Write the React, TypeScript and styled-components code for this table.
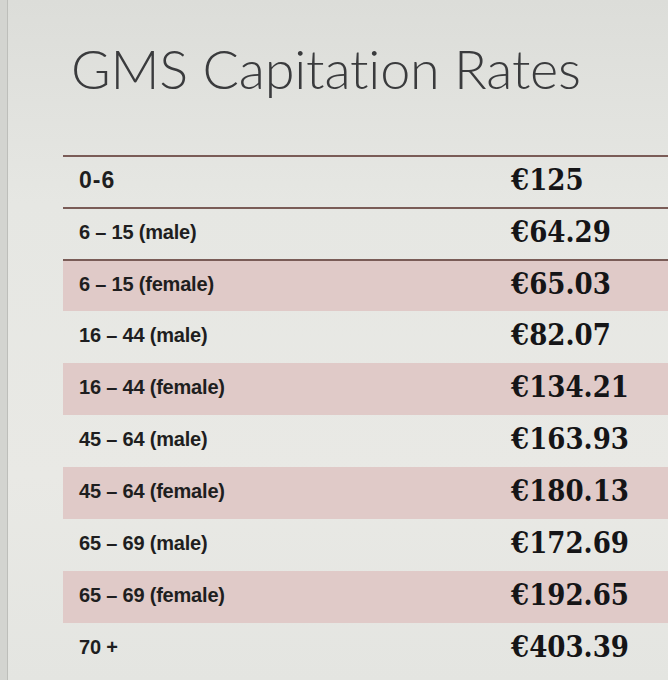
import React from 'react';
import styled, { createGlobalStyle } from 'styled-components';

const GlobalStyle = createGlobalStyle`
  html, body {
    margin: 0;
    padding: 0;
    background: #e3e4e0;
    overflow: hidden;
  }
`;

const Screen = styled.div`
  width: 668px;
  height: 680px;
  overflow: hidden;
  display: flex;
  background: linear-gradient(180deg, #dcddd9 0%, #e6e7e3 30%, #e9e9e5 70%, #e4e5e1 100%);
`;

const Bezel = styled.div`
  width: 7px;
  flex: none;
  background: #d3d4d0;
  border-right: 1px solid #bdbeba;
`;

const Content = styled.div`
  flex: 1;
  display: flex;
  flex-direction: column;
  padding: 37px 0 0 55px;
`;

const Title = styled.h1`
  margin: 0 0 0 8px;
  font-family: Lato, "Open Sans", sans-serif;
  font-weight: 300;
  font-size: 54px;
  line-height: 64px;
  color: #3a3b3d;
  letter-spacing: -0.2px;
`;

const Table = styled.div`
  margin-top: 54px;
  margin-right: -40px;
  display: flex;
  flex-direction: column;
`;

const Row = styled.div<{ $shaded?: boolean; $ruled?: boolean }>`
  height: 52px;
  display: grid;
  grid-template-columns: 448px 1fr;
  align-items: center;
  padding-bottom: 4px;
  box-sizing: border-box;
  background: ${p => (p.$shaded ? '#e0cac8' : 'transparent')};
  border-top: ${p => (p.$ruled ? '2px solid #7a5c57' : '0')};
`;

const Label = styled.span<{ $large?: boolean }>`
  padding-left: 16px;
  font-family: "Liberation Sans", Arial, sans-serif;
  font-weight: 700;
  font-size: ${p => (p.$large ? '23px' : '20px')};
  letter-spacing: ${p => (p.$large ? '1px' : '-0.2px')};
  color: #1e1e20;
`;

const Price = styled.span`
  font-family: "DejaVu Serif", serif;
  font-stretch: condensed;
  font-weight: 700;
  font-size: 29px;
  color: #151517;
`;

const rates = [
  { label: '0-6', price: '€125', large: true, ruled: true },
  { label: '6 – 15 (male)', price: '€64.29', ruled: true },
  { label: '6 – 15 (female)', price: '€65.03', ruled: true, shaded: true },
  { label: '16 – 44 (male)', price: '€82.07' },
  { label: '16 – 44 (female)', price: '€134.21', shaded: true },
  { label: '45 – 64 (male)', price: '€163.93' },
  { label: '45 – 64 (female)', price: '€180.13', shaded: true },
  { label: '65 – 69 (male)', price: '€172.69' },
  { label: '65 – 69 (female)', price: '€192.65', shaded: true },
  { label: '70 +', price: '€403.39' },
];

const App = () => (
  <>
    <GlobalStyle />
    <Screen>
      <Bezel />
      <Content>
        <Title>GMS Capitation Rates</Title>
        <Table>
          {rates.map(r => (
            <Row key={r.label} $shaded={r.shaded} $ruled={r.ruled}>
              <Label $large={r.large}>{r.label}</Label>
              <Price>{r.price}</Price>
            </Row>
          ))}
        </Table>
      </Content>
    </Screen>
  </>
);

export default App;
